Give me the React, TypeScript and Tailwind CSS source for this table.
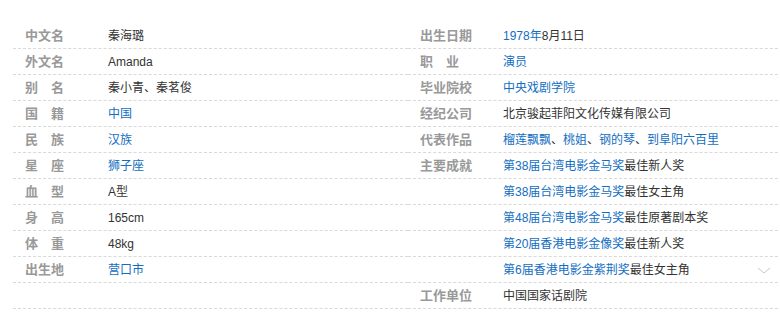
import React from 'react';

type Part = { text: string; link?: boolean };
type Item = { name?: string; value?: Part[] };

const L = (text: string): Part => ({ text, link: true });
const T = (text: string): Part => ({ text });

// 左栏
const LEFT: Item[] = [
  { name: '中文名', value: [T('秦海璐')] },
  { name: '外文名', value: [T('Amanda')] },
  { name: '别　名', value: [T('秦小青、秦茗俊')] },
  { name: '国　籍', value: [L('中国')] },
  { name: '民　族', value: [L('汉族')] },
  { name: '星　座', value: [L('狮子座')] },
  { name: '血　型', value: [T('A型')] },
  { name: '身　高', value: [T('165cm')] },
  { name: '体　重', value: [T('48kg')] },
  { name: '出生地', value: [L('营口市')] },
  {},
];

// 右栏
const RIGHT: Item[] = [
  { name: '出生日期', value: [L('1978年'), T('8月11日')] },
  { name: '职　业', value: [L('演员')] },
  { name: '毕业院校', value: [L('中央戏剧学院')] },
  { name: '经纪公司', value: [T('北京骏起菲阳文化传媒有限公司')] },
  {
    name: '代表作品',
    value: [L('榴莲飘飘'), T('、'), L('桃姐'), T('、'), L('钢的琴'), T('、'), L('到阜阳六百里')],
  },
  { name: '主要成就', value: [L('第38届台湾电影金马奖'), T('最佳新人奖')] },
  { value: [L('第38届台湾电影金马奖'), T('最佳女主角')] },
  { value: [L('第48届台湾电影金马奖'), T('最佳原著剧本奖')] },
  { value: [L('第20届香港电影金像奖'), T('最佳新人奖')] },
  { value: [L('第6届香港电影金紫荆奖'), T('最佳女主角')] },
  { name: '工作单位', value: [T('中国国家话剧院')] },
];

function Row({ item, more }: { item: Item; more?: boolean }) {
  return (
    <div className="relative flex h-[26px] items-center border-b border-dashed border-[#d9d9d9] pl-3">
      <div className="w-[83px] shrink-0 text-[13px] font-bold text-[#999]">{item.name}</div>
      <div className="whitespace-nowrap text-[12px] text-[#333]">
        {item.value?.map((p, i) =>
          p.link ? (
            <a key={i} className="text-[#136ec2]">
              {p.text}
            </a>
          ) : (
            <span key={i}>{p.text}</span>
          )
        )}
      </div>
      {more && (
        <svg className="absolute left-[349px] top-[10px]" width="14" height="7" viewBox="0 0 14 7">
          <path d="M1 1 L7 6 L13 1" fill="none" stroke="#c8c8c8" strokeWidth="1" />
        </svg>
      )}
    </div>
  );
}

export default function App() {
  return (
    <div
      className="h-[325px] w-[780px] overflow-hidden bg-white pt-[23px] pl-[13px]"
      style={{ fontFamily: '"Liberation Sans", "Noto Sans CJK SC", sans-serif' }}
    >
      <div className="flex w-[790px]">
        <div className="w-[395px] shrink-0">
          {LEFT.map((item, i) => (
            <Row key={i} item={item} />
          ))}
        </div>
        <div className="w-[395px] shrink-0">
          {RIGHT.map((item, i) => (
            <Row key={i} item={item} more={i === 9} />
          ))}
        </div>
      </div>
    </div>
  );
}
